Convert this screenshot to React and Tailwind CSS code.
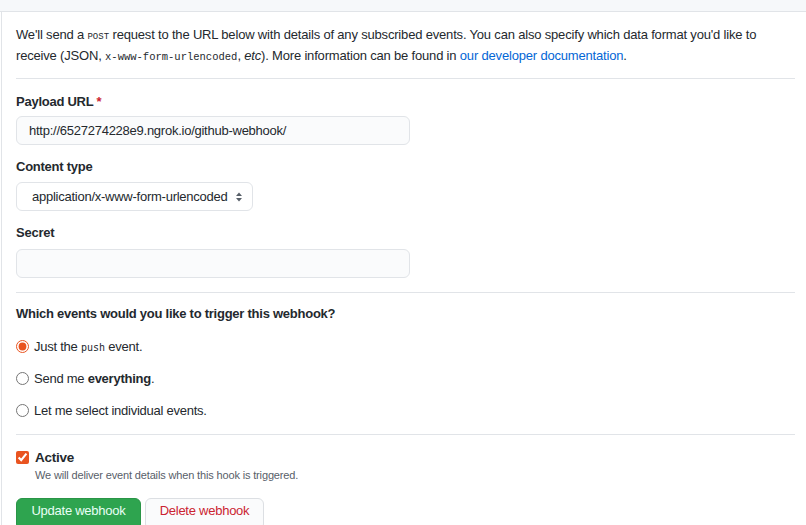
import React, { useState } from "react";

const font = { fontFamily: '"Liberation Sans", Arial, sans-serif' };

const Divider = () => <div className="h-px bg-[#e1e4e8] mr-[11px]"></div>;

const App = () => {
  const [event, setEvent] = useState("push");
  const [active, setActive] = useState(true);

  return (
    <div className="w-[806px] h-[525px] overflow-hidden bg-white text-[#24292e] text-[13px] tracking-[-0.25px]" style={font}>
      {/* Top band */}
      <div className="h-[12px] bg-[#f6f8fa] border-b border-[#e1e4e8]"></div>

      <div className="ml-px border-l border-[#e1e4e8] pl-[14px] h-full">
        <p className="pt-[12px] pb-[12px] leading-[21px] pr-[20px] tracking-[-0.18px]">
          We'll send a <code className="font-['Liberation_Mono',monospace] text-[9px] tracking-normal leading-none uppercase">post</code> request to the URL below with details of any subscribed events. You can also specify which data format you'd like to receive (JSON, <code className="font-['Liberation_Mono',monospace] text-[10.5px] tracking-normal leading-none">x-www-form-urlencoded</code>, <em>etc</em>). More information can be found in{" "}
          <a className="text-[#0366d6]">our developer documentation</a>.
        </p>
        <Divider />

        {/* Payload URL */}
        <div className="pt-[12px]">
          <label className="block font-bold leading-[21px]">
            Payload URL <span className="text-[#cb2431]">*</span>
          </label>
          <div className="mt-[4px] w-[394px] h-[29px] rounded-md border border-[#e1e4e8] bg-[#fafbfc] px-[12px] flex items-center">
            http://6527274228e9.ngrok.io/github-webhook/
          </div>
        </div>

        {/* Content type */}
        <div className="pt-[11px]">
          <label className="block font-bold leading-[21px]">Content type</label>
          <div className="mt-[5px] w-[237px] h-[29px] rounded-md border border-[#e1e4e8] bg-white pl-[15px] pr-[8px] flex items-center justify-between whitespace-nowrap">
            <span>application/x-www-form-urlencoded</span>
            <svg width="8" height="12" viewBox="0 0 8 12" className="mr-[1px]">
              <path d="M4 1.5 L7 5 H1 Z" fill="#586069" />
              <path d="M4 10.5 L7 7 H1 Z" fill="#586069" />
            </svg>
          </div>
        </div>

        {/* Secret */}
        <div className="pt-[11px]">
          <label className="block font-bold leading-[21px]">Secret</label>
          <div className="mt-[6px] w-[394px] h-[29px] rounded-md border border-[#e1e4e8] bg-[#fafbfc]"></div>
        </div>

        <div className="mt-[14px]">
          <Divider />
        </div>

        {/* Events */}
        <div className="pt-[10px]">
          <h3 className="font-bold leading-[21px]">Which events would you like to trigger this webhook?</h3>
          <div className="mt-[12px] flex flex-col gap-[11px]">
            {[
              { id: "push", label: (<>Just the <code className="font-['DejaVu_Sans_Mono',monospace] text-[10px] tracking-normal leading-none">push</code> event.</>) },
              { id: "all", label: (<>Send me <strong>everything</strong>.</>) },
              { id: "select", label: "Let me select individual events." },
            ].map((opt) => (
              <label key={opt.id} className="flex items-center gap-[5px] leading-[21px] h-[21px]">
                <input
                  type="radio"
                  name="events"
                  checked={event === opt.id}
                  onChange={() => setEvent(opt.id)}
                  className="m-0 w-[13px] h-[13px] accent-[#e95420]"
                />
                <span>{opt.label}</span>
              </label>
            ))}
          </div>
        </div>

        <div className="mt-[13px]">
          <Divider />
        </div>

        {/* Active */}
        <div className="pt-[12px]">
          <label className="flex items-center gap-[6px] leading-[21px]">
            <input
              type="checkbox"
              checked={active}
              onChange={() => setActive(!active)}
              className="m-0 w-[13px] h-[13px] accent-[#e95420]"
            />
            <span className="font-bold text-[13.5px]">Active</span>
          </label>
          <p className="pl-[19px] text-[11px] tracking-[-0.15px] text-[#586069] leading-[16px] -mt-[1px]">
            We will deliver event details when this hook is triggered.
          </p>
        </div>

        {/* Buttons */}
        <div className="mt-[15px] flex gap-[4px]">
          <button className="w-[125px] h-[32px] rounded-md bg-[#2ea44f] border border-[#2a9547] text-[#e8fff6] flex justify-center pt-[2px]">
            Update webhook
          </button>
          <button className="w-[119px] h-[32px] rounded-md bg-[#fafbfc] border border-[#dcdfe3] text-[#cb2431] flex justify-center pt-[2px]">
            Delete webhook
          </button>
        </div>
      </div>
    </div>
  );
};

export default App;
